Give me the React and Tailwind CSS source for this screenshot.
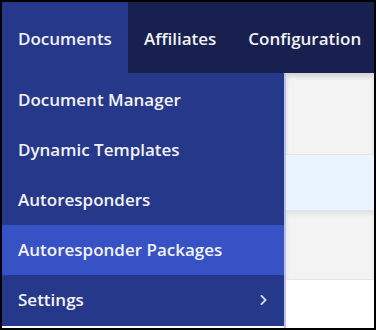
import {FaChevronRight} from 'react-icons/fa';

const navItems = ['Documents', 'Affiliates', 'Configuration'];

const menuItems = [
    {label: 'Document Manager'},
    {label: 'Dynamic Templates'},
    {label: 'Autoresponders'},
    {label: 'Autoresponder Packages', active: true},
    {label: 'Settings', submenu: true},
];

const App = () => {
    return (
        <div className="w-[376px] h-[330px] bg-black p-[2px] overflow-hidden" style={{fontFamily: '"Open Sans", "Liberation Sans", sans-serif'}}>
            <div className="w-full h-full flex flex-col bg-white overflow-hidden">
                <nav className="h-[71px] shrink-0 flex bg-[#17204f] text-[17px] font-semibold text-[#f2f2f6] whitespace-nowrap">
                    {navItems.map((item, i) => (
                        <div
                            key={item}
                            className={`flex items-center px-4 pt-[3px] ${i === 0 ? 'bg-[#26388a]' : ''}`}
                        >
                            {item}
                        </div>
                    ))}
                </nav>

                <div className="flex flex-1 min-h-0">
                    <ul className="w-[282px] shrink-0 h-[253px] bg-[#26388a] pt-[2px] text-[17px] font-semibold text-[#f2f2f6] whitespace-nowrap">
                        {menuItems.map((item) => (
                            <li
                                key={item.label}
                                className={`h-[50px] flex items-center justify-between pl-4 pr-[15px] ${item.active ? 'bg-[#3652c5]' : ''}`}
                            >
                                <span>{item.label}</span>
                                {item.submenu && <FaChevronRight className="text-[#d4d8ea] w-[11px] h-[12px]"/>}
                            </li>
                        ))}
                    </ul>

                    <div className="w-[2px] shrink-0 bg-[#b9c2ea]"></div>

                    <div className="flex-1 flex flex-col">
                        <div className="h-[81px] bg-[#f3f3f3] shadow-[inset_0_4px_4px_rgba(0,0,0,0.12)]"></div>
                        <div className="h-[56px] bg-[#eaf4fe] border-t border-[#e2e2e2]"></div>
                        <div className="h-[70px] bg-[#f3f3f3] shadow-[inset_0_4px_4px_rgba(0,0,0,0.08)] border-b border-[#e6e6e6]"></div>
                        <div className="flex-1 bg-white"></div>
                    </div>
                </div>
            </div>
        </div>
    );
};

export default App;
